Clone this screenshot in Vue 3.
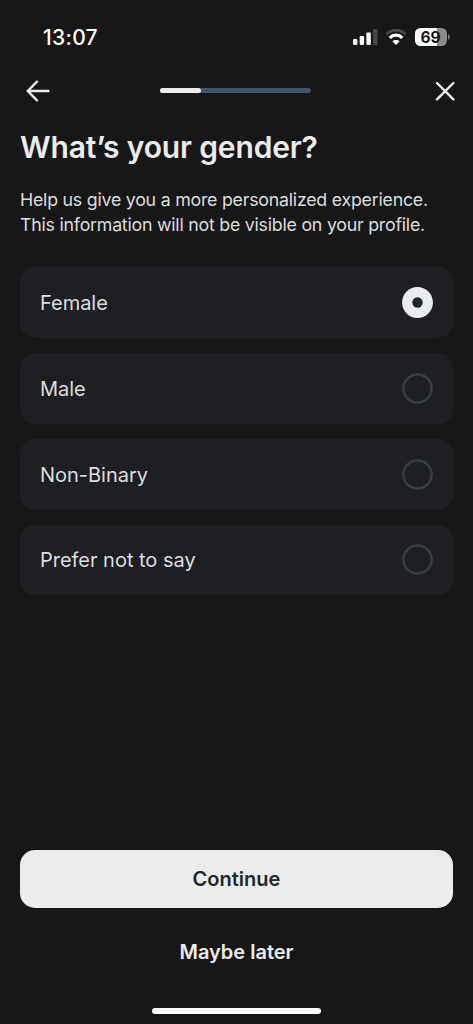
<script setup>
import { ref } from 'vue'

const options = ['Female', 'Male', 'Non-Binary', 'Prefer not to say']
const selected = ref('Female')
</script>

<template>
  <div class="screen">
    <div class="status">
      <span class="time">13:07</span>
      <div class="indicators">
        <svg class="signal" width="25" height="16" viewBox="0 0 25 16">
          <rect x="0" y="10" width="4.4" height="6" rx="1.3" fill="#fff" />
          <rect x="6.7" y="7" width="4.4" height="9" rx="1.3" fill="#fff" />
          <rect x="13.4" y="3.5" width="4.4" height="12.5" rx="1.3" fill="#fff" />
          <rect x="20.1" y="0" width="4.4" height="16" rx="1.3" fill="#474747" />
        </svg>
        <svg class="wifi" width="22" height="16" viewBox="0 0 22 16" fill="none">
          <path d="M1.3 5.3C6.7 -0.1 15.3 -0.1 20.7 5.3" stroke="#474747" stroke-width="3" />
          <path d="M4.7 8.8C8.2 5.3 13.8 5.3 17.3 8.8" stroke="#fff" stroke-width="3.2" />
          <path d="M11 16L7.3 12.3C9.3 10.5 12.7 10.5 14.7 12.3Z" fill="#fff" />
        </svg>
        <div class="battery"><span>69</span></div>
        <svg class="cap" width="2" height="6" viewBox="0 0 2 6"><path d="M0 0Q2 1 2 3Q2 5 0 6Z" fill="#777" /></svg>
      </div>
    </div>

    <nav class="nav">
      <button aria-label="Back">
        <svg width="24" height="22" viewBox="0 0 24 22"><path d="M11 1.7L1.7 11L11 20.3M1.7 11H22.4" /></svg>
      </button>
      <div class="progress"><div class="progress-fill"></div></div>
      <button aria-label="Close">
        <svg width="20" height="20" viewBox="0 0 20 20"><path d="M2 2L18.4 18.4M18.4 2L2 18.4" /></svg>
      </button>
    </nav>

    <main>
      <h1>What’s your gender?</h1>
      <p>Help us give you a more personalized experience.<br />This information will not be visible on your profile.</p>
      <div class="options" role="radiogroup">
        <div
          v-for="option in options"
          :key="option"
          class="option"
          role="radio"
          :aria-checked="selected === option"
          @click="selected = option"
        >
          <span>{{ option }}</span>
          <svg class="radio" width="31" height="31" viewBox="0 0 31 31">
            <template v-if="selected === option">
              <circle cx="15.5" cy="15.5" r="15.4" fill="#ebecee" />
              <circle cx="15.5" cy="15.5" r="5.2" fill="#20252a" />
            </template>
            <circle v-else cx="15.5" cy="15.5" r="14.1" fill="none" stroke="#3a3c43" stroke-width="2.5" />
          </svg>
        </div>
      </div>
    </main>

    <footer>
      <button class="continue">Continue</button>
      <button class="later">Maybe later</button>
      <div class="home"></div>
    </footer>
  </div>
</template>

<style>
body {
  background: #171717;
}
</style>

<style scoped>
.screen {
  box-sizing: border-box;
  width: 473px;
  height: 1024px;
  display: flex;
  flex-direction: column;
  background: #171717;
  color: #ebecee;
  font-family: Inter, "Liberation Sans", sans-serif;
  overflow: hidden;
}
button {
  padding: 0;
  border: 0;
  background: none;
  font: inherit;
  color: inherit;
}
svg {
  display: block;
}
.status {
  display: flex;
  justify-content: space-between;
  height: 64px;
  padding: 0 23px 0 43px;
  box-sizing: border-box;
  color: #fff;
}
.time {
  margin-top: 25px;
  line-height: 26px;
  font-size: 21px;
  font-weight: 550;
  letter-spacing: 0.3px;
}
.indicators {
  display: flex;
  align-items: center;
  height: 18px;
  margin-top: 28px;
}
.wifi {
  margin-left: 7px;
}
.battery {
  width: 32px;
  height: 18px;
  margin-left: 8px;
  border-radius: 5.5px;
  background: linear-gradient(90deg, #fff 69%, #8b8b8b 69%);
  color: #171717;
  font-size: 15.5px;
  font-weight: 700;
  line-height: 19px;
  text-align: center;
}
.battery span {
  margin-left: -1px;
}
.cap {
  margin-left: 1px;
}
.nav {
  display: flex;
  align-items: center;
  justify-content: space-between;
  height: 54px;
  padding: 0 18px 0 26px;
}
.nav path {
  fill: none;
  stroke: #ebecee;
  stroke-width: 2.4;
  stroke-linecap: round;
  stroke-linejoin: round;
}
.progress {
  width: 151px;
  height: 5px;
  margin: 0 14px 1px 0;
  border-radius: 3px;
  background: #43536b;
}
.progress-fill {
  width: 41px;
  height: 5px;
  border-radius: 3px;
  background: #ebecee;
}
main {
  padding: 9px 20px 0;
}
h1 {
  margin: 0;
  font-size: 30px;
  line-height: 40px;
  font-weight: 600;
  letter-spacing: -0.14px;
}
p {
  margin: 20.4px 0 29.8px;
  font-size: 17.8px;
  line-height: 25px;
  letter-spacing: -0.24px;
  color: #dcddde;
  white-space: nowrap;
}
.options {
  display: grid;
  gap: 15px;
}
.option {
  display: flex;
  align-items: center;
  justify-content: space-between;
  height: 70.8px;
  padding: 0 20px;
  border-radius: 15px;
  background: #1e1f23;
  color: #dcddde;
  font-size: 20px;
}
.option span {
  padding-top: 1px;
  letter-spacing: -0.02px;
}
footer {
  margin-top: auto;
  padding: 0 20px 10px;
  display: flex;
  flex-direction: column;
  align-items: center;
}
.continue {
  width: 100%;
  height: 58px;
  border-radius: 15px;
  background: #ebecee;
  color: #22262d;
  font-size: 20px;
  font-weight: 600;
}
.later {
  margin-top: 29px;
  height: 30px;
  font-size: 20px;
  font-weight: 600;
}
.home {
  width: 169px;
  height: 6px;
  margin-top: 41px;
  border-radius: 3px;
  background: #fff;
}
</style>
